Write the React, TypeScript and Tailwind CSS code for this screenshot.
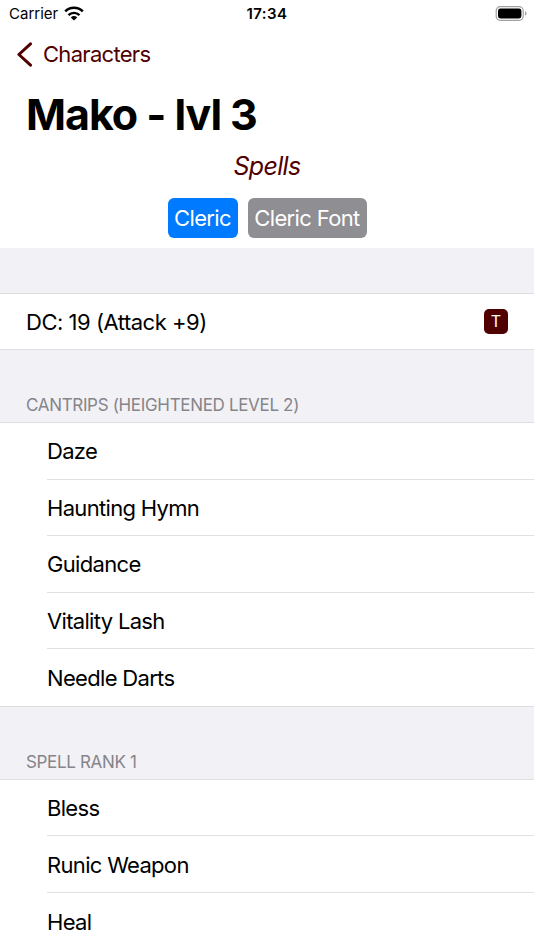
import { clsx } from "clsx";

const cantrips = ["Daze", "Haunting Hymn", "Guidance", "Vitality Lash", "Needle Darts"];
const rankOne = ["Bless", "Runic Weapon", "Heal"];

function StatusBar() {
  return (
    <div className="grid h-7 grid-cols-3 items-center pl-[9px] pr-[7px] text-[15px] leading-[18px]">
      <div className="flex items-center gap-1.5">
        <span>Carrier</span>
        <svg width="20" height="15" viewBox="0 0 20 15" className="-mt-0.5">
          <path d="M1.2 5.4 A12.4 12.4 0 0 1 18.8 5.4" fill="none" stroke="black" strokeWidth="2.6" />
          <path d="M4.5 9.1 A7.8 7.8 0 0 1 15.5 9.1" fill="none" stroke="black" strokeWidth="2.4" />
          <path d="M6.8 11.4 A4.6 4.6 0 0 1 13.2 11.4 L10 14.6 Z" fill="black" />
        </svg>
      </div>
      <span className="pr-0.5 text-center font-semibold tracking-[0.4px]">17:34</span>
      <svg width="32" height="15" viewBox="0 0 32 15" className="-mt-0.5 justify-self-end">
        <rect x="1.2" y="0.7" width="27" height="13.6" rx="4" fill="none" stroke="#a0a0a0" strokeWidth="1.2" />
        <rect x="3" y="2.5" width="23.4" height="10" rx="2.4" fill="black" />
        <path d="M30 5.2 Q31.6 5.9 31.6 7.5 Q31.6 9.1 30 9.8 Z" fill="#a0a0a0" />
      </svg>
    </div>
  );
}

function SectionTitle({ children }: { children: string }) {
  return (
    <h2 className="flex h-[73px] items-end border-b border-[#dedee1] pb-[7px] pl-[26px] text-[17px] leading-5 tracking-[-0.33px] text-[#85858a]">
      {children}
    </h2>
  );
}

function SpellList({ spells, last }: { spells: string[]; last?: boolean }) {
  return (
    <ul className={clsx("bg-white pl-[47px]", last ? "pb-2" : "border-b border-[#dedee1]")}>
      {spells.map((spell, i) => (
        <li
          key={spell}
          className={clsx(
            "flex items-center pt-0.5 text-[22px] tracking-[-0.68px]",
            i < spells.length - 1 ? "h-[56.6px] border-b border-[#e0e0e2]" : "h-[56.3px]"
          )}
        >
          {spell}
        </li>
      ))}
    </ul>
  );
}

export default function App() {
  return (
    <div className="h-[950px] overflow-hidden bg-[#f2f1f6] font-['Inter','Liberation_Sans',sans-serif] text-black">
      <header className="h-[248px] bg-white">
        <StatusBar />
        <a className="flex h-[53px] items-center gap-[11px] pl-[17px] text-[22px] tracking-[-0.7px] text-[#500000]">
          <svg width="15" height="25" viewBox="0 0 15 25">
            <path d="M13.5 1.8 L1.9 12.5 L13.5 23.2" fill="none" stroke="currentColor" strokeWidth="3" strokeLinecap="round" strokeLinejoin="round" />
          </svg>
          <span>Characters</span>
        </a>
        <h1 className="pl-[26px] pt-2 text-[43px] font-bold leading-[50px] tracking-[-1.05px]">Mako - lvl 3</h1>
        <p className="mt-[11px] text-center text-[25px] italic leading-[32px] tracking-[-0.65px] text-[#500000]">Spells</p>
        <div className="mt-4 flex justify-center gap-2.5 text-[22px] tracking-[-0.65px] text-white">
          <button className="h-10 w-[70px] rounded-md bg-[#007aff]">Cleric</button>
          <button className="h-10 w-[119px] rounded-md bg-[#8e8e93]">Cleric Font</button>
        </div>
      </header>
      <main>
        <div className="mt-[45px] flex h-[57px] items-center justify-between border-y border-[#dedee1] bg-white px-[26px] text-[22px]">
          <span className="pt-0.5 tracking-[-0.48px]">DC: 19 (Attack +9)</span>
          <span className="mb-px grid h-[25px] w-6 place-items-center rounded-[5px] bg-[#500000] text-base text-white">T</span>
        </div>
        <SectionTitle>CANTRIPS (HEIGHTENED LEVEL 2)</SectionTitle>
        <SpellList spells={cantrips} />
        <SectionTitle>SPELL RANK 1</SectionTitle>
        <SpellList spells={rankOne} last />
      </main>
    </div>
  );
}
